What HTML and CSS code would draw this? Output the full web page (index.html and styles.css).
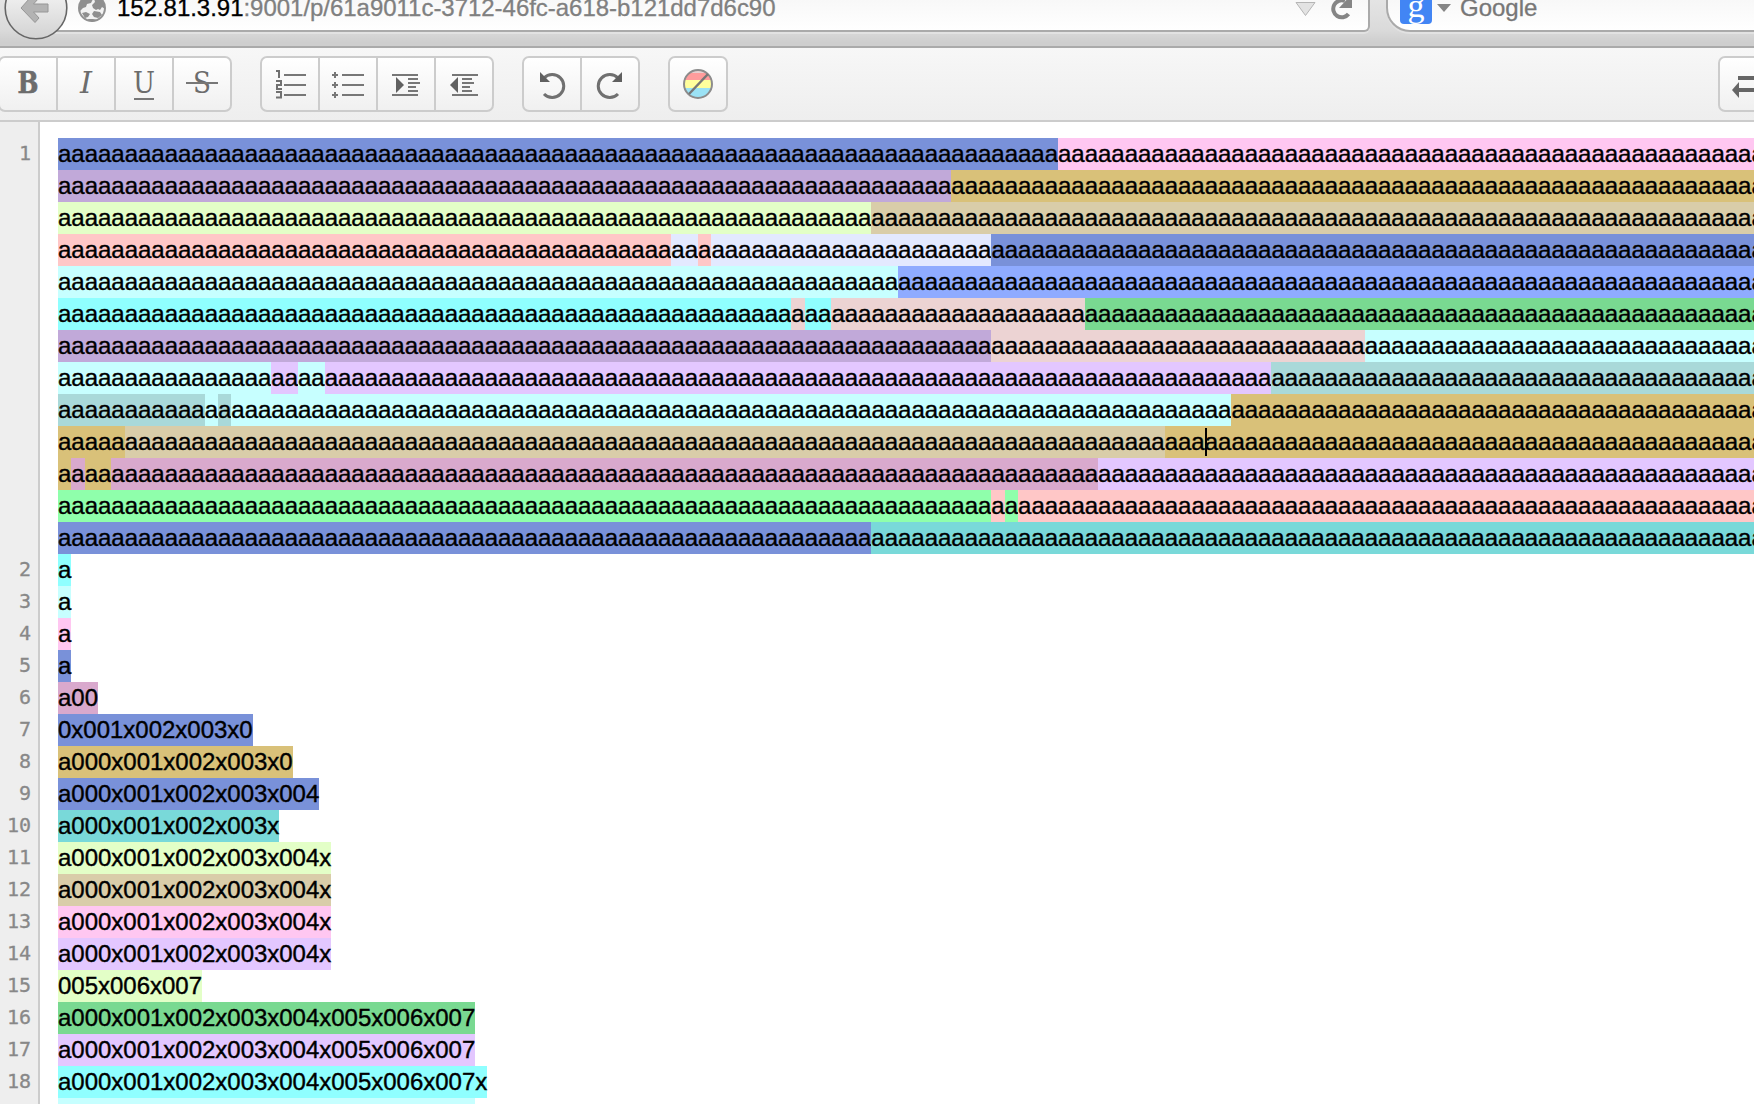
FILE: index.html
```html
<!DOCTYPE html>
<html lang="en">
<head>
<meta charset="utf-8">
<title>Etherpad</title>
<link rel="stylesheet" href="styles.css">
</head>
<body>
<header class="browser">
  <div class="address">
    <svg class="globe" width="28" height="22" viewBox="0 0 28 22"><circle cx="14" cy="8" r="13" fill="#f2f2f2" stroke="#929292" stroke-width="2"/><path d="M1 6 4-3 11-5 15-1 13 3 9 4 8 7 5 8 2 11zM15-5 23-2 27 5 27 9 24 7 22 10 20 9 18 10 15 8 14 5 17 2zM4 13 8 12 12 14 10 17 7 18zM16 11 22 12 24 15 20 18 16 17 14 14zM9 19 15 19 20 20 14 22z" fill="#8f8f8f"/></svg>
    <span class="url"><b>152.81.3.91</b>:9001/p/61a9011c-3712-46fc-a618-b121dd7d6c90</span>
    <svg class="address-actions" width="60" height="24" viewBox="0 0 60 24"><path d="M1 2.500H20L10.500 15.500z" fill="#e3e3e3" stroke="#b5b5b5"/><path d="M53.500 14A8.500 8.500 0 1 1 50 1" fill="none" stroke="#858585" stroke-width="4"/><path d="M57-6V8H44z" fill="#858585"/></svg>
  </div>
  <div class="search">
    <span class="engine">g</span>
    <svg width="14" height="16" viewBox="0 0 14 16"><path d="M0 4H14L7 12z" fill="#858585"/></svg>
    <span class="query">Google</span>
  </div>
  <svg class="back" width="70" height="42" viewBox="0 0 70 42"><defs><linearGradient id="bk" x1="0" y1="0" x2="0" y2="1"><stop offset=".3" stop-color="#f0f0f0"/><stop offset="1" stop-color="#d2d2d2"/></linearGradient></defs><circle cx="36" cy="8" r="30.800" fill="url(#bk)" stroke="#666" stroke-width="1.600"/><path d="M21 8 34-6.500 39-2 33.500 4H48V12H33.500L39 18 35 22.500z" fill="#b3b3b3" stroke="#969696"/></svg>
</header>
<nav class="toolbar">
  <div class="group first">
    <button><svg width="56" height="52" viewBox="0 0 56 52"><text x="17.500" y="35" class="serif bold" textLength="21" lengthAdjust="spacingAndGlyphs">B</text></svg></button>
    <button><svg width="56" height="52" viewBox="0 0 56 52"><text x="22" y="35" class="serif italic" textLength="12" lengthAdjust="spacingAndGlyphs">I</text></svg></button>
    <button><svg width="56" height="52" viewBox="0 0 56 52"><text x="17" y="35" class="serif" textLength="22" lengthAdjust="spacingAndGlyphs">U</text><path d="M18 41H38" class="line"/></svg></button>
    <button><svg width="56" height="52" viewBox="0 0 56 52"><text x="19" y="35" class="serif" textLength="18" lengthAdjust="spacingAndGlyphs">S</text><path d="M12 25H44" class="line"/></svg></button>
  </div>
  <div class="group">
    <button><svg width="56" height="52" viewBox="0 0 56 52"><path d="M22 17H44M22 27H44M22 37H44" class="line"/><path d="M14 13H17V20M14 23H19V27H15V31H20M14 34H19V39.500H14" fill="none" stroke="#707070" stroke-width="2"/></svg></button>
    <button><svg width="56" height="52" viewBox="0 0 56 52"><path d="M22 17H44M22 27H44M22 37H44M12 17H18M12 27H18M12 37H18M15 14V20M15 24V30M15 34V40" class="line"/></svg></button>
    <button><svg width="56" height="52" viewBox="0 0 56 52"><path d="M14 17H40M30 21H40M30 25H42M30 29H38M30 33H40M14 37H40" class="line"/><path d="M18 19V35L26 27z" fill="#606060"/></svg></button>
    <button><svg width="56" height="52" viewBox="0 0 56 52"><path d="M16 17H42M26 21H36M26 25H38M26 29H34M26 33H36M16 37H42" class="line"/><path d="M22 19V35L14 27z" fill="#606060"/></svg></button>
  </div>
  <div class="group">
    <button><svg width="56" height="52" viewBox="0 0 56 52"><path d="M20 20A11.500 11.500 0 1 1 20 36" fill="none" stroke="#707070" stroke-width="3"/><path d="M16 14V24H26z" fill="#606060"/></svg></button>
    <button><svg width="56" height="52" viewBox="0 0 56 52"><path d="M36 20A11.500 11.500 0 1 0 36 36" fill="none" stroke="#707070" stroke-width="3"/><path d="M40 14V24H30z" fill="#606060"/></svg></button>
  </div>
  <div class="group">
    <button><svg width="56" height="52" viewBox="0 0 56 52"><defs><clipPath id="disc"><circle cx="28" cy="26" r="14"/></clipPath></defs><g clip-path="url(#disc)"><path d="M10 10H46V22H10z" fill="#ff9c9c"/><path d="M10 10H46V15H10z" fill="#e6d0d0"/><path d="M10 22H46V30H10z" fill="#ffff9c"/><path d="M10 30H46V42H10z" fill="#9be2f5"/></g><circle cx="28" cy="26" r="14" fill="none" stroke="#8c8c8c" stroke-width="2"/><path d="M19 36 38 16" stroke="#777" stroke-width="2.500"/></svg></button>
  </div>
  <div class="group last">
    <button><svg width="56" height="52" viewBox="0 0 56 52"><path d="M18 20H42M18 32H42" stroke="#666" stroke-width="4"/><path d="M19 24V40L12 32z" fill="#666"/></svg></button>
  </div>
</nav>
<main class="editor">
  <div class="gutter" id="gutter"></div>
  <div class="pad" id="pad"></div>
</main>
<script src="pad.js"></script>
</body>
</html>
```
FILE: styles.css
```css
body {
  margin: 0;
  height: 1104px;
  overflow: hidden;
  display: flex;
  flex-direction: column;
  background: #fff;
  font-family: "Liberation Sans", Arial, sans-serif;
}
svg { display: block; flex: none; }
.browser {
  position: relative;
  flex: none;
  box-sizing: border-box;
  height: 48px;
  overflow: hidden;
  display: flex;
  align-items: flex-start;
  gap: 16px;
  padding-left: 40px;
  background: linear-gradient(#e4e4e4, #dadada 66%, #cecece 92%);
  border-bottom: 2px solid #aaa;
}
.address, .search {
  box-sizing: border-box;
  height: 32px;
  display: flex;
  align-items: flex-start;
  background: linear-gradient(#f8f8f8, #fff);
  border: solid #aaa;
  box-shadow: 0 2px 0 #e2e2e2;
}
.address {
  width: 1330px;
  flex: none;
  padding-left: 38px;
  border-width: 0 2px 2px 0;
  border-radius: 0 0 6px 0;
}
.search {
  flex: 1;
  padding-left: 12px;
  border-width: 0 0 2px 2px;
  border-radius: 0 0 0 24px;
}
.url {
  flex: 1;
  margin: -6px 0 0 11px;
  font-size: 24px;
  line-height: 28px;
  letter-spacing: -0.03px;
  color: #808080;
  white-space: nowrap;
  -webkit-text-stroke: 0.3px;
}
.url b { font-weight: 400; color: #000; }
.address-actions { margin-right: 13px; }
.engine {
  width: 32px;
  height: 24px;
  margin-right: 5px;
  border-radius: 0 0 4px 4px;
  background: #4285f4;
  color: #fff;
  font: 34px/12px "Liberation Serif", serif;
  text-align: center;
}
.query {
  margin: -6px 0 0 9px;
  font-size: 24px;
  line-height: 28px;
  color: #777;
  -webkit-text-stroke: 0.3px;
}
.back { position: absolute; left: 0; top: 0; }
.toolbar {
  flex: none;
  box-sizing: border-box;
  height: 74px;
  display: flex;
  gap: 28px;
  padding-top: 8px;
  background: linear-gradient(#f7f7f7, #eee);
  border-bottom: 2px solid #ccc;
}
.group {
  box-sizing: border-box;
  height: 56px;
  display: flex;
  flex: none;
  border: 2px solid #ccc;
  border-radius: 7px;
  background: linear-gradient(#fff, #f0f0f0);
}
.group.first { margin-left: -2px; }
.group.last { margin-left: auto; margin-right: -24px; }
.group button {
  padding: 0;
  border: 0;
  background: none;
}
.group button + button { border-left: 2px solid #ccc; }
.line { stroke: #777; stroke-width: 2; fill: none; }
.serif { font: 30px "DejaVu Serif", serif; fill: #6c6c6c; }
.bold { font-weight: 700; stroke: #6c6c6c; stroke-width: 0.6px; }
.italic { font-style: italic; }
.editor {
  flex: 1;
  min-height: 0;
  display: flex;
  overflow: hidden;
}
.gutter {
  flex: none;
  box-sizing: border-box;
  width: 40px;
  padding: 16px 7px 0 0;
  background: #eee;
  border-right: 2px solid #ccc;
  color: #888;
  font: 20px/32px "DejaVu Sans Mono", monospace;
  text-align: right;
  -webkit-text-stroke: 0.3px;
}
.number { height: 32px; line-height: 30px; }
.number.wrapped { height: 416px; }
.pad {
  flex: 1;
  min-width: 0;
  overflow: hidden;
  padding: 16px 0 0 18px;
  font-size: 24px;
  line-height: 32px;
  letter-spacing: -0.014px;
  color: #000;
  -webkit-text-stroke: 0.4px;
}
.row { display: flex; height: 32px; white-space: pre; }
.row span { flex: none; }
.caret { position: relative; }
.caret::before {
  content: "";
  position: absolute;
  left: 0;
  top: 2px;
  width: 2px;
  height: 28px;
  background: #000;
}
.blue { background: #7991d9; }
.sky { background: #8fabff; }
.pale { background: #e3e9ff; }
.pink { background: #ffc7f1; }
.plum { background: #c1a9d9; }
.gold { background: #d9c179; }
.sand { background: #d9cda9; }
.lime { background: #e3ffc7; }
.salmon { background: #ffc7c7; }
.ice { background: #c7ffff; }
.cyan { background: #8fffff; }
.rose { background: #ecd3d3; }
.green { background: #79d991; }
.mint { background: #8fffab; }
.lavender { background: #e3c7ff; }
.mist { background: #a9d9d9; }
.mauve { background: #d9a9cd; }
.teal { background: #79d9d9; }
```
FILE: pad.js
```js
// Author runs of the wrapped first line: [author colour, characters].
const wrapped = [
  [["blue", 75], ["pink", 53]],
  [["plum", 67], ["gold", 61]],
  [["lime", 61], ["sand", 67]],
  [["salmon", 46], ["pale", 2], ["salmon", 1], ["pale", 21], ["blue", 58]],
  [["ice", 63], ["sky", 65]],
  [["cyan", 55], ["rose", 1], ["cyan", 2], ["rose", 19], ["green", 51]],
  [["plum", 70], ["rose", 28], ["ice", 30]],
  [["ice", 16], ["lavender", 2], ["ice", 2], ["lavender", 71], ["mist", 37]],
  [["mist", 11], ["ice", 1], ["mist", 1], ["ice", 75], ["gold", 40]],
  [["gold", 5], ["sand", 78], ["gold", 3], ["gold caret", 42]],
  [["gold", 1], ["mauve", 1], ["gold", 2], ["mauve", 74], ["lavender", 50]],
  [["mint", 70], ["salmon", 1], ["mint", 1], ["salmon", 56]],
  [["blue", 61], ["teal", 67]]
];

const lines = [
  ["cyan", "a"],
  ["ice", "a"],
  ["pink", "a"],
  ["blue", "a"],
  ["mauve", "a00"],
  ["blue", "0x001x002x003x0"],
  ["gold", "a000x001x002x003x0"],
  ["blue", "a000x001x002x003x004"],
  ["teal", "a000x001x002x003x"],
  ["lime", "a000x001x002x003x004x"],
  ["sand", "a000x001x002x003x004x"],
  ["pink", "a000x001x002x003x004x"],
  ["lavender", "a000x001x002x003x004x"],
  ["lime", "005x006x007"],
  ["green", "a000x001x002x003x004x005x006x007"],
  ["lavender", "a000x001x002x003x004x005x006x007"],
  ["cyan", "a000x001x002x003x004x005x006x007x"],
  ["ice", "a000x001x002x003x004x005x006x007"]
];

const pad = document.getElementById("pad");
const gutter = document.getElementById("gutter");

function addRow(runs) {
  const row = document.createElement("div");
  row.className = "row";
  for (const [author, text] of runs) {
    const span = document.createElement("span");
    span.className = author;
    span.textContent = text;
    row.append(span);
  }
  pad.append(row);
}

function addNumber(n, extra) {
  const number = document.createElement("div");
  number.className = "number" + extra;
  number.textContent = n;
  gutter.append(number);
}

wrapped.forEach(runs => addRow(runs.map(([author, count]) => [author, "a".repeat(count)])));
addNumber(1, " wrapped");
lines.forEach((line, i) => {
  addRow([line]);
  if (i < 17) addNumber(i + 2, "");
});
```
